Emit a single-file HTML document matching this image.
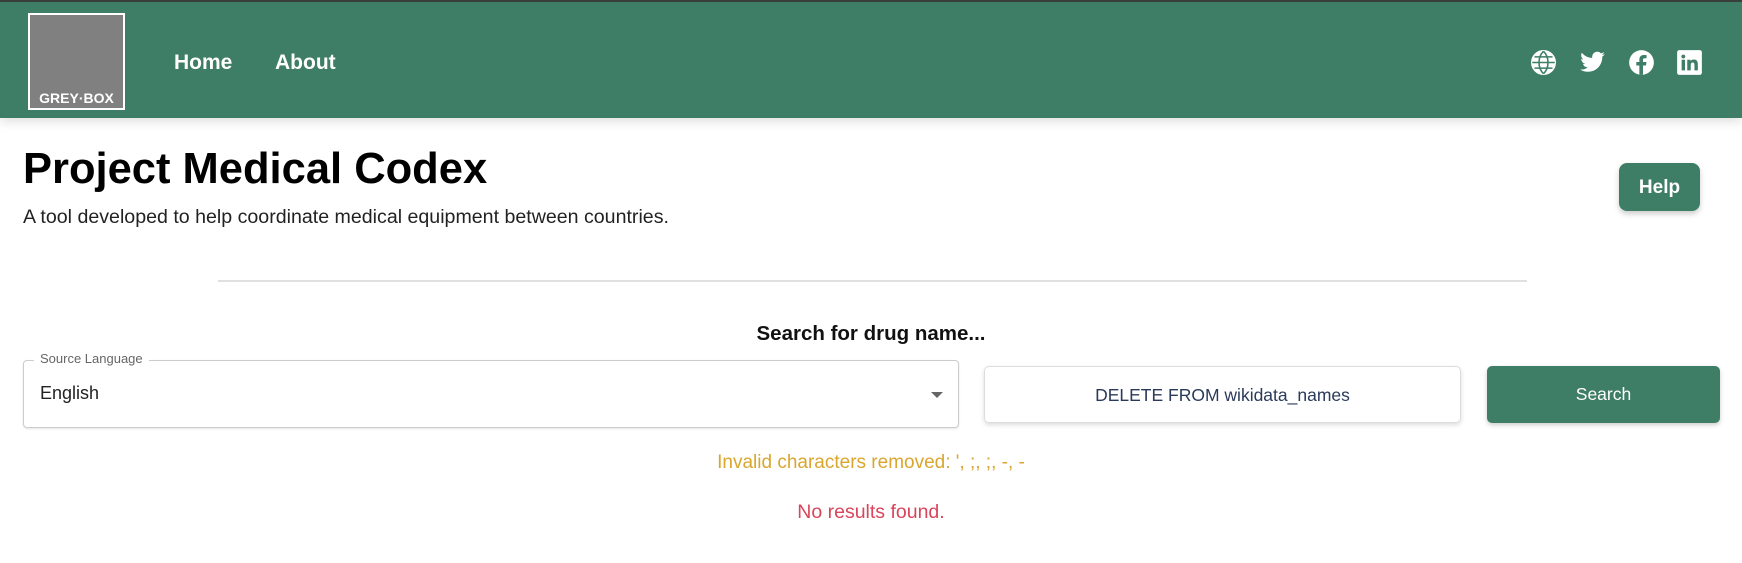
<!DOCTYPE html>
<html><head><meta charset="utf-8"><style>
*{box-sizing:border-box;margin:0;padding:0}
body{width:1742px;height:563px;overflow:hidden;background:#fff;font-family:"Liberation Sans",sans-serif;position:relative;color:#111}
.nav{position:absolute;left:0;top:0;width:1742px;height:118px;background:#3e7d66;border-top:2px solid #3a3f3c;box-shadow:0 4px 10px rgba(0,0,0,.12)}
.logo{position:absolute;left:28px;top:11px;width:97px;height:97px;background:#808080;border:2px solid #fff}
.logo span{position:absolute;bottom:2px;left:0;right:0;text-align:center;color:#fff;font-weight:bold;font-size:14px}
.nl{position:absolute;top:49px;color:#fff;font-weight:bold;font-size:21px}
.ic{position:absolute;top:47px;width:27px;height:27px}
.abs{position:absolute}
</style></head><body>
<div class="nav">
<div class="logo"><span>GREY·BOX</span></div>
<div class="nl" style="left:174px">Home</div>
<div class="nl" style="left:275px">About</div>
<svg class="ic" style="left:1530px" viewBox="0 0 24 24" fill="none" stroke="#fff" stroke-width="2.2"><circle cx="12" cy="12" r="10" fill="#fff"/><path d="M2 12h20M12 2c-3 3-4 6.5-4 10s1 7 4 10M12 2c3 3 4 6.5 4 10s-1 7-4 10M4 7h16M4 17h16" stroke="#3e7d66" stroke-width="1.4"/></svg>
<svg class="ic" style="left:1579px" viewBox="0 0 24 24" fill="#fff"><path d="M23 4.6a9 9 0 0 1-2.6.7 4.5 4.5 0 0 0 2-2.5 9 9 0 0 1-2.9 1.1A4.5 4.5 0 0 0 11.8 8 12.8 12.8 0 0 1 2.5 3.3a4.5 4.5 0 0 0 1.4 6 4.5 4.5 0 0 1-2-.6 4.5 4.5 0 0 0 3.6 4.4 4.5 4.5 0 0 1-2 .1 4.5 4.5 0 0 0 4.2 3.1A9 9 0 0 1 1 18.2 12.8 12.8 0 0 0 7.9 20.2c8.3 0 12.8-6.9 12.8-12.8v-.6A9 9 0 0 0 23 4.6z"/></svg>
<svg class="ic" style="left:1628px" viewBox="0 0 24 24"><circle cx="12" cy="12" r="11" fill="#fff"/><path d="M13.3 23v-8.3h2.7l.4-3.1h-3.1V9.7c0-.9.3-1.5 1.6-1.5h1.6V5.4c-.3 0-1.300-.1-2.400-.1-2.4 0-4 1.4-4 4.1v2.2H7.4v3.1h2.7V23z" fill="#3e7d66"/></svg>
<svg class="ic" style="left:1676px" viewBox="0 0 24 24"><rect x="1" y="1" width="22" height="22" rx="2" fill="#fff"/><path d="M5 9.5h3V19H5zM6.5 5a1.7 1.7 0 1 1 0 3.4 1.7 1.7 0 0 1 0-3.4zM10 9.5h2.9v1.3c.4-.8 1.4-1.5 2.9-1.5 3 0 3.6 2 3.6 4.6V19h-3v-4.5c0-1.1 0-2.5-1.5-2.5s-1.8 1.2-1.8 2.4V19H10z" fill="#3e7d66"/></svg>
</div>
<div class="abs" style="left:23px;top:145px;font-size:43.5px;font-weight:bold;color:#000">Project Medical Codex</div>
<div class="abs" style="left:23px;top:206px;font-size:19.6px;color:#222">A tool developed to help coordinate medical equipment between countries.</div>
<div class="abs" style="left:1619px;top:163px;width:81px;height:48px;background:#3e7d66;border-radius:8px;color:#fff;font-weight:bold;font-size:19px;text-align:center;line-height:50px;box-shadow:0 3px 6px rgba(0,0,0,.2)">Help</div>
<div class="abs" style="left:218px;top:280px;width:1309px;height:2px;background:#e0e0e0"></div>
<div class="abs" style="left:0;width:1742px;top:322px;text-align:center;font-size:20.5px;font-weight:bold;color:#111">Search for drug name...</div>
<div class="abs" style="left:23px;top:360px;width:936px;height:68px;border:1px solid #ccc;border-radius:4px;box-shadow:0 1px 2px rgba(0,0,0,.1)"></div>
<div class="abs" style="left:34px;top:351px;padding:0 6px;background:#fff;font-size:13px;color:#666">Source Language</div>
<div class="abs" style="left:40px;top:383px;font-size:18px;color:#222">English</div>
<div class="abs" style="left:931px;top:392px;width:0;height:0;border-left:6px solid transparent;border-right:6px solid transparent;border-top:6px solid #666"></div>
<div class="abs" style="left:984px;top:366px;width:477px;height:57px;border:1px solid #ddd;border-radius:5px;box-shadow:0 2px 5px rgba(0,0,0,.15);text-align:center;line-height:57px;font-size:17.5px;color:#2a3a5a">DELETE FROM wikidata_names</div>
<div class="abs" style="left:1487px;top:366px;width:233px;height:57px;background:#3e7d66;border-radius:5px;box-shadow:0 2px 5px rgba(0,0,0,.2);text-align:center;line-height:57px;font-size:17.5px;color:#fff">Search</div>
<div class="abs" style="left:0;width:1742px;top:452px;text-align:center;font-size:19px;color:#d9a62e">Invalid characters removed: ', ;, ;, -, -</div>
<div class="abs" style="left:0;width:1742px;top:501px;text-align:center;font-size:19.5px;color:#d9455a">No results found.</div>
</body></html>
